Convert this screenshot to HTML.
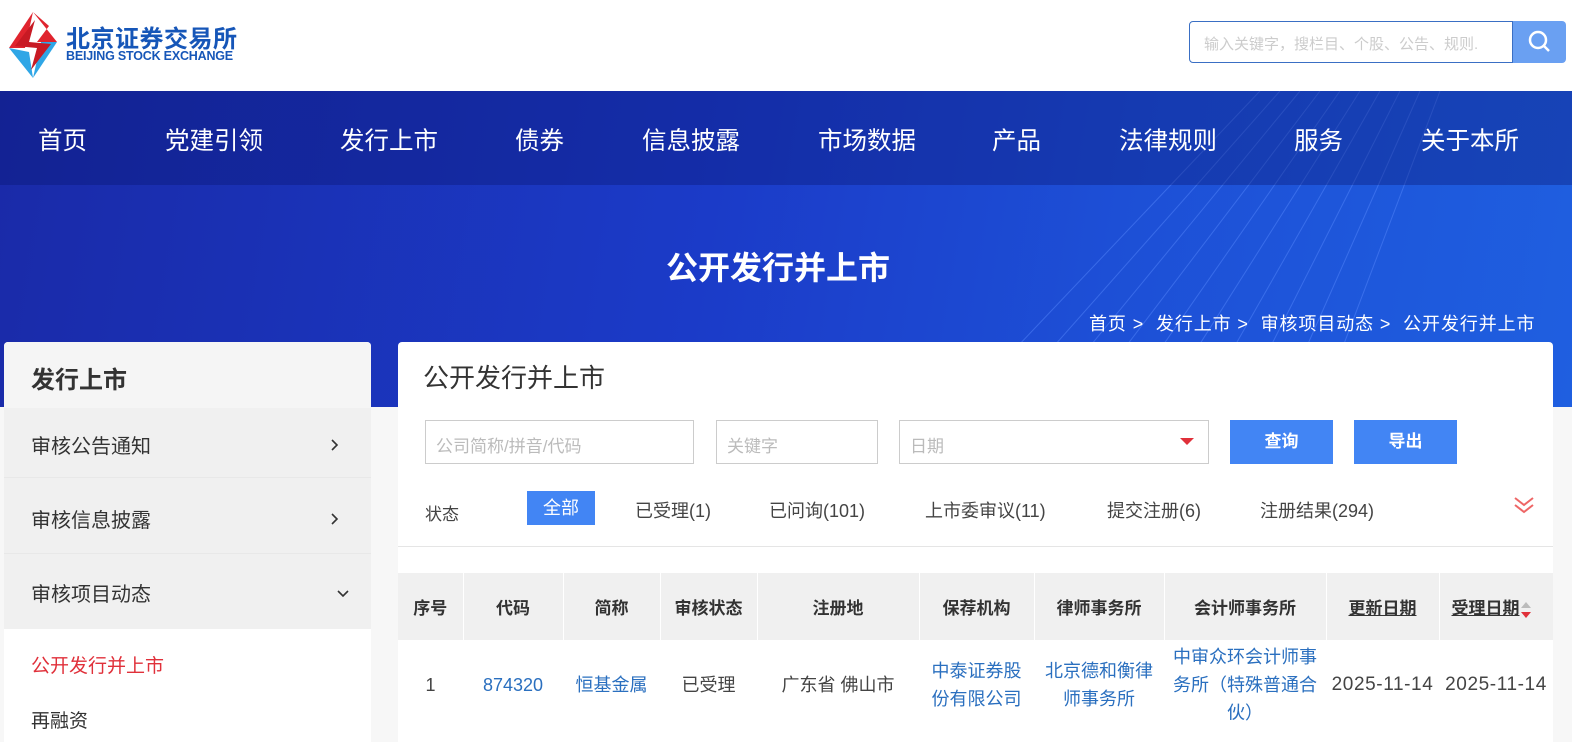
<!DOCTYPE html>
<html><head><meta charset="utf-8"><style>
*{margin:0;padding:0;box-sizing:border-box}
body{width:1572px;height:729px;overflow:hidden;background:#f7f7f7;font-family:"Liberation Sans","Noto Sans CJK SC",sans-serif;position:relative}
.abs{position:absolute}
.hdr{left:0;top:0;width:1572px;height:91px;background:#fff}
.banner{left:0;top:91px;width:1572px;height:316px;background:linear-gradient(100deg,#1a2aa8 0%,#1b3bc8 45%,#1d4fd6 70%,#1f5fe0 100%);overflow:hidden}
.nav{left:0;top:0;width:1572px;height:94px;background:rgba(10,20,110,.35)}
.nav span{position:absolute;top:31px;color:#fff;font-size:24.5px}
.side{left:4px;top:342px;width:367px;height:400px;background:#fff;border-radius:4px 4px 0 0;overflow:hidden}
.main{left:398px;top:342px;width:1155px;height:400px;background:#fff;border-radius:4px 4px 0 0}
.inp{position:absolute;top:78px;height:44px;border:1px solid #ccc;color:#bbb;font-size:17px;padding:11px 0 0 10px}
.btn{position:absolute;top:78px;height:44px;width:103px;background:#4285f4;color:#fff;font-size:17px;font-weight:bold;text-align:center;line-height:44px}
.st{position:absolute;top:155px;font-size:18px;color:#444}
table{position:absolute;left:0;top:231px;border-collapse:collapse;width:1155px}
th{background:#f0f0f0;height:67px;font-size:17px;color:#333;border-left:1px solid #fff}
td{height:90px;text-align:center;font-size:18px;color:#444;line-height:28px}
.d{font-size:19px;letter-spacing:.6px}
.l{color:#2a6fbf}
</style></head><body>
<div class="abs hdr">
<svg class="abs" style="left:7px;top:12px" width="52" height="66" viewBox="0 0 52 66"><path d="M26 0 L50 30 L30 30 L42 14Z" fill="#e0242e"/><path d="M26 0 L2 36 L18 36 Z" fill="#e0242e"/><path d="M2 36 L26 66 L22 40 Z" fill="#2fa6e6"/><path d="M50 30 L26 66 L34 30 Z" fill="#2fa6e6"/><path d="M8 34 L28 8 L22 30 L44 32 L24 58 L30 36Z" fill="#c81a24"/></svg>
<div class="abs" style="left:66px;top:19px;font-size:24px;font-weight:bold;color:#1656b8;letter-spacing:.5px">北京证券交易所</div>
<div class="abs" style="left:66px;top:49px;font-size:12.5px;font-weight:bold;color:#1656b8;letter-spacing:-.2px">BEIJING STOCK EXCHANGE</div>
<div class="abs" style="left:1189px;top:21px;width:324px;height:42px;border:1px solid #3a6fc4;border-radius:4px 0 0 4px;color:#ccc;font-size:15px;padding:11px 0 0 14px">输入关键字，搜栏目、个股、公告、规则.</div>
<div class="abs" style="left:1513px;top:21px;width:53px;height:42px;background:#6aa0f2;border-radius:0 4px 4px 0"><svg width="53" height="42"><circle cx="25" cy="19" r="8" stroke="#fff" stroke-width="2.5" fill="none"/><path d="M31 25 L36 30" stroke="#fff" stroke-width="2.5"/></svg></div>
</div>
<div class="abs banner">
<svg class="abs" style="left:700px;top:0" width="872" height="316"><g stroke="#5b8cff" stroke-width="1" opacity=".45" fill="none"><path d="M560 0 L260 316"/><path d="M580 0 L300 316"/><path d="M600 0 L340 316"/><path d="M620 0 L380 316"/><path d="M640 0 L420 316"/><path d="M660 0 L460 316"/><path d="M680 0 L500 316"/><path d="M700 0 L540 316"/><path d="M720 0 L580 316"/><path d="M740 0 L620 316"/></g></svg>
<div class="abs nav">
<span style="left:38px">首页</span><span style="left:165px">党建引领</span><span style="left:340px">发行上市</span><span style="left:515px">债券</span><span style="left:642px">信息披露</span><span style="left:818px">市场数据</span><span style="left:992px">产品</span><span style="left:1119px">法律规则</span><span style="left:1294px">服务</span><span style="left:1421px">关于本所</span>
</div>
<div class="abs" style="left:0;width:1556px;top:152px;text-align:center;color:#fff;font-size:32px;font-weight:bold">公开发行并上市</div>
<div class="abs" style="left:1089px;top:219px;color:#fff;font-size:18px;white-space:nowrap;letter-spacing:.9px">首页 &gt;&nbsp; 发行上市 &gt;&nbsp; 审核项目动态 &gt;&nbsp; 公开发行并上市</div>
</div>
<div class="abs side">
<div style="height:66px;background:#f5f5f5;padding:18px 0 0 27px;font-size:24px;font-weight:bold;color:#333">发行上市</div>
<div style="height:70px;background:#f0f0f0;border-bottom:1px solid #e8e8e8;padding:22px 0 0 27px;font-size:20px;color:#333;position:relative">审核公告通知<svg style="position:absolute;right:32px;top:31px" width="8" height="12"><path d="M1 1 L6 6 L1 11" stroke="#333" stroke-width="1.6" fill="none"/></svg></div>
<div style="height:76px;background:#f0f0f0;border-bottom:1px solid #e8e8e8;padding:26px 0 0 27px;font-size:20px;color:#333;position:relative">审核信息披露<svg style="position:absolute;right:32px;top:35px" width="8" height="12"><path d="M1 1 L6 6 L1 11" stroke="#333" stroke-width="1.6" fill="none"/></svg></div>
<div style="height:75px;background:#f0f0f0;padding:24px 0 0 27px;font-size:20px;color:#333;position:relative">审核项目动态<svg style="position:absolute;right:22px;top:36px" width="12" height="8"><path d="M1 1 L6 6 L11 1" stroke="#333" stroke-width="1.6" fill="none"/></svg></div>
<div style="padding:22px 0 0 27px;font-size:19px;color:#e0303a">公开发行并上市</div>
<div style="padding:28px 0 0 27px;font-size:19px;color:#333">再融资</div>
</div>
<div class="abs main">
<div class="abs" style="left:25px;top:16px;font-size:26px;color:#333">公开发行并上市</div>
<div class="inp" style="left:27px;width:269px">公司简称/拼音/代码</div>
<div class="inp" style="left:318px;width:162px">关键字</div>
<div class="inp" style="left:501px;width:310px">日期<svg style="position:absolute;right:14px;top:17px" width="14" height="8"><path d="M0 0 L14 0 L7 7Z" fill="#e0303a"/></svg></div>
<div class="btn" style="left:832px">查询</div>
<div class="btn" style="left:956px">导出</div>
<div class="st" style="left:27px;top:158px;font-size:17px">状态</div>
<div class="abs" style="left:129px;top:149px;width:68px;height:34px;background:#4285f4;color:#fff;font-size:18px;text-align:center;line-height:34px">全部</div>
<div class="st" style="left:237px">已受理(1)</div>
<div class="st" style="left:371px">已问询(101)</div>
<div class="st" style="left:527px">上市委审议(11)</div>
<div class="st" style="left:709px">提交注册(6)</div>
<div class="st" style="left:862px">注册结果(294)</div>
<svg class="abs" style="left:1115px;top:154px" width="22" height="18"><path d="M2 2 L11 9 L20 2 M2 9 L11 16 L20 9" stroke="#ee6666" stroke-width="2" fill="none"/></svg>
<div class="abs" style="left:0;top:204px;width:1155px;height:1px;background:#e5e5e5"></div>
<table><tr><th style="width:65px;border:0">序号</th><th style="width:100px">代码</th><th style="width:97px">简称</th><th style="width:97px">审核状态</th><th style="width:162px">注册地</th><th style="width:115px">保荐机构</th><th style="width:130px">律师事务所</th><th style="width:162px">会计师事务所</th><th style="width:113px;text-decoration:underline">更新日期</th><th style="width:114px;text-align:left;padding-left:12px"><span style="text-decoration:underline">受理日期</span><svg style="vertical-align:middle" width="12" height="18"><path d="M1 7 L11 7 L6 1Z" fill="#bbb"/><path d="M1 11 L11 11 L6 17Z" fill="#e0303a"/></svg></th></tr>
<tr><td>1</td><td class="l">874320</td><td class="l">恒基金属</td><td>已受理</td><td>广东省 佛山市</td><td class="l">中泰证券股<br>份有限公司</td><td class="l">北京德和衡律<br>师事务所</td><td class="l">中审众环会计师事<br>务所（特殊普通合<br>伙）</td><td class="d">2025-11-14</td><td class="d">2025-11-14</td></tr></table>
</div>
</body></html>
